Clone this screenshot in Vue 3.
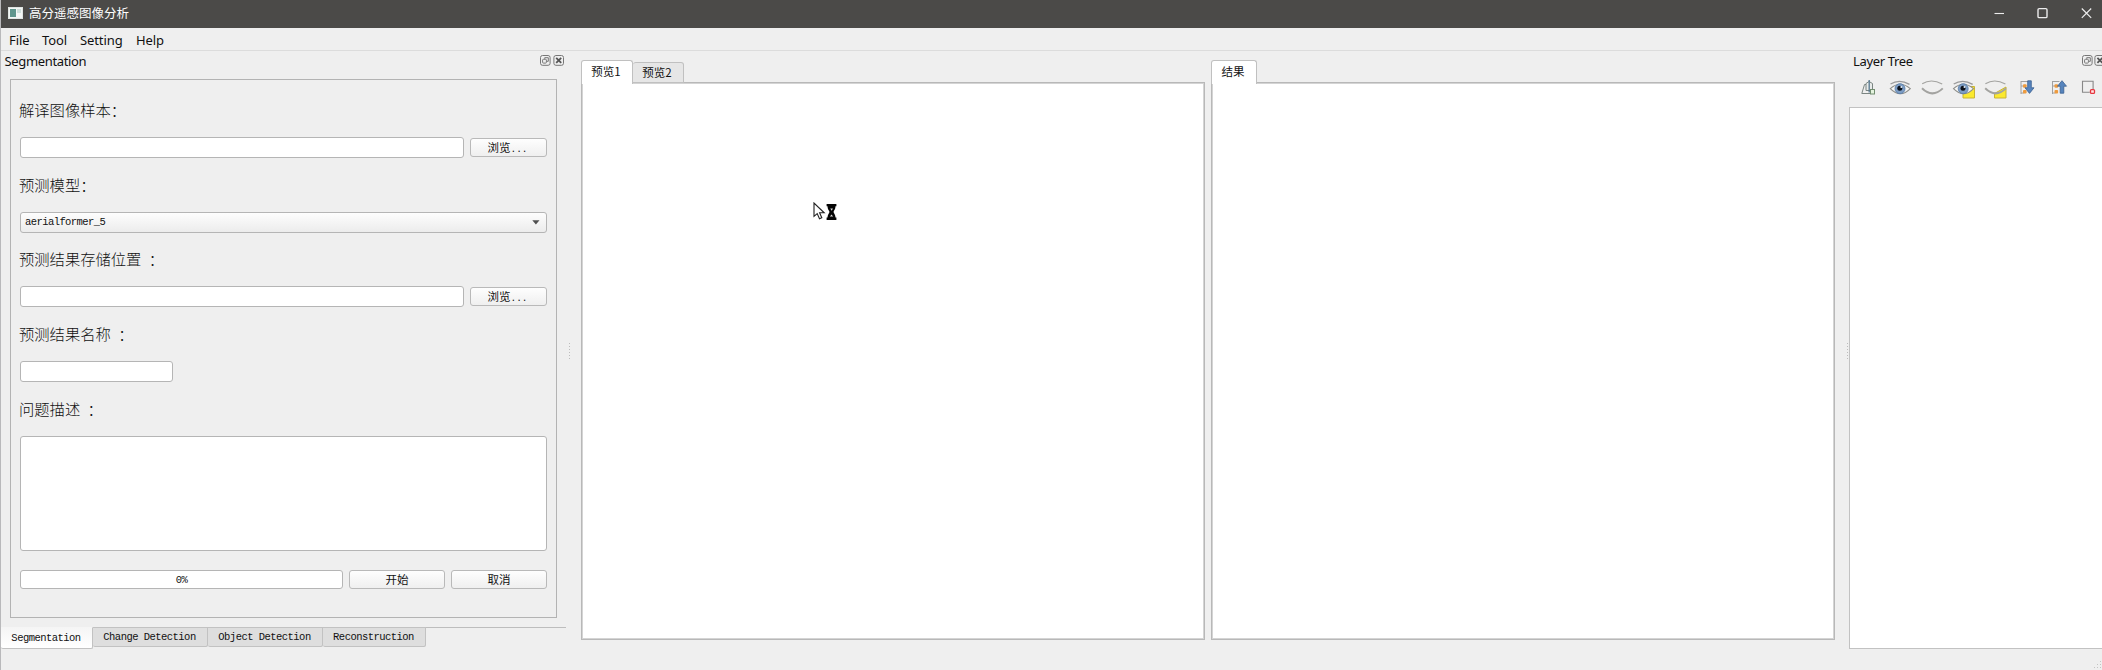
<script setup>
import { ref } from 'vue'

const menus = ['File', 'Tool', 'Setting', 'Help']
const dockTabs = ['Segmentation', 'Change Detection', 'Object Detection', 'Reconstruction']
const activeDock = ref(0)
const grip = [0, 1, 2, 3, 4, 5]
</script>

<template>
  <div class="window">
    <header class="titlebar">
      <svg class="appicon" width="15" height="12" viewBox="0 0 15 12">
        <rect x=".5" y=".5" width="14" height="11" fill="#f3f6f5" stroke="#dfe5e3" />
        <rect x="2" y="2" width="6" height="8" fill="#5f968d" />
        <rect x="9" y="2" width="4" height="4" fill="#cfe0dc" />
      </svg>
      <span class="title">高分遥感图像分析</span>
      <svg class="winbtns" width="100" height="14" viewBox="0 0 100 14" fill="none" stroke="#ececec">
        <path d="M1.500 7.500H11" stroke-width="1.1" />
        <rect x="45" y="2.6" width="9" height="9" rx="1.2" stroke-width="1.4" />
        <path d="M88.8 2.500l9.400 9.400M98.200 2.500l-9.400 9.400" stroke-width="1.2" />
      </svg>
    </header>
    <nav class="menubar">
      <span v-for="m in menus" :key="m" :class="m.toLowerCase()">{{ m }}</span>
    </nav>

    <main class="main">
      <section class="dock">
        <div class="docktitle">
          <span>Segmentation</span>
          <svg class="dockbtns" width="24" height="11" viewBox="0 0 24 11" fill="none" stroke="#777">
            <rect x=".5" y=".5" width="9.6" height="9.8" rx="2" />
            <rect x="2.6" y="4.3" width="3.8" height="3.8" rx=".8" />
            <path d="M4.7 3.8V2.7h3.6v3.6H7" />
            <rect x="13.9" y=".5" width="9.6" height="9.8" rx="2" />
            <path d="M16.2 2.8l5 5M21.2 2.8l-5 5" stroke="#555" stroke-width="1.8" />
          </svg>
        </div>
        <form class="panel" @submit.prevent>
          <label>解译图像样本：</label>
          <div class="row">
            <div class="field wide"></div>
            <button class="btn browse">浏览<i>...</i></button>
          </div>
          <label>预测模型：</label>
          <div class="row">
            <div class="combo">
              <span>aerialformer_5</span>
              <svg width="8" height="5" viewBox="0 0 8 5"><path d="M.3.3h7.2L3.9 4.6z" fill="#505050" /></svg>
            </div>
          </div>
          <label>预测结果存储位置 ：</label>
          <div class="row">
            <div class="field wide"></div>
            <button class="btn browse">浏览<i>...</i></button>
          </div>
          <label>预测结果名称 ：</label>
          <div class="row"><div class="field short"></div></div>
          <label>问题描述 ：</label>
          <div class="field area"></div>
          <div class="actions">
            <div class="progress">0%</div>
            <button class="btn">开始</button>
            <button class="btn">取消</button>
          </div>
        </form>
        <div class="docktabs">
          <span
            v-for="(t, i) in dockTabs"
            :key="t"
            class="dtab"
            :class="[{ active: i === activeDock }, 'd' + i]"
            @click="activeDock = i"
          >{{ t }}</span>
          <span class="rest"></span>
        </div>
      </section>

      <div class="splitter left"><i v-for="g in grip" :key="g"></i></div>

      <section class="view">
        <div class="tabs">
          <span class="tab on">预览1</span>
          <span class="tab">预览2</span>
        </div>
        <div class="canvas"></div>
      </section>
      <section class="view result">
        <div class="tabs"><span class="tab on">结果</span></div>
        <div class="canvas"></div>
      </section>

      <div class="splitter right"><i v-for="g in grip" :key="g"></i></div>

      <section class="layers">
        <div class="docktitle">
          <span>Layer Tree</span>
          <svg class="dockbtns" width="24" height="11" viewBox="0 0 24 11" fill="none" stroke="#777">
            <rect x=".5" y=".5" width="9.6" height="9.8" rx="2" />
            <rect x="2.6" y="4.3" width="3.8" height="3.8" rx=".8" />
            <path d="M4.7 3.8V2.7h3.6v3.6H7" />
            <rect x="12.9" y=".5" width="9.6" height="9.8" rx="2" />
            <path d="M15.4 2.8l5 5M20.4 2.8l-5 5" stroke="#555" stroke-width="1.8" />
          </svg>
        </div>
        <svg class="tools" width="244" height="22" viewBox="0 0 244 22" fill="none">
          <defs>
            <g id="eye">
              <path d="M1 4Q10 -1.4 20 4.4" stroke="#9a9a9a" stroke-width="1.3" />
              <path d="M.8 8.600Q10.500 -.2 20.800 8.600Q11 19 .8 8.600z" fill="#f6f6f4" stroke="#8e8e8a" stroke-width="1.1" />
              <circle cx="10.5" cy="8.700" r="5" fill="#7d9dc4" stroke="#567ba8" stroke-width=".8" />
              <circle cx="10.300" cy="8.2" r="2.5" fill="#0c1119" />
              <circle cx="11.8" cy="6.9" r="1" fill="#e8f0f8" />
            </g>
            <g id="lid" stroke="#a3a3a0">
              <path d="M1 3.8Q10 -2 21 4" stroke-width="1.1" />
              <path d="M.8 8.300Q11 18.400 21.600 8.400" stroke-width="1.9" />
            </g>
            <g id="tree">
              <path d="M1.500 1v13M1.500 1.500h7M1.500 6h3M1.500 13h3" stroke="#a0a0a0" />
              <rect x="3.500" y="4.200" width="3.600" height="3.600" rx="1" fill="#ee9b3e" />
              <rect x="3.500" y="10" width="3.600" height="3.600" rx="1" fill="#ee9b3e" />
            </g>
          </defs>
          <g stroke="#7b8582" stroke-width="1">
            <path d="M3.500 4.500L.8 13.500H9M3.500 4.500H6" />
            <path d="M5 10.500V3.500L8 1.500l3.500 2v7z" fill="#e8ebea" />
            <path d="M8.200 0v12.500" stroke="#557890" stroke-width="1.3" />
            <rect x="9.500" y="9.500" width="4" height="4.500" fill="#e4f3de" stroke="#728d70" />
          </g>
          <use href="#eye" x="28.500" y="0" />
          <use href="#lid" x="60.200" y="0" />
          <path d="M102 6.500h11.500v11.500H102z" fill="#fbe92e" stroke="#c9b435" />
          <use href="#eye" x="91.700" y="0" />
          <path d="M133.500 13.500L145 7v11h-11.500z" fill="#fbe92e" stroke="#c9b435" />
          <use href="#lid" x="123.400" y="0" />
          <use href="#tree" x="158.500" y="0" />
          <path d="M166.700 .8h3.600v7h2.700l-4.500 5.600-4.500-5.600h2.700z" fill="#5684bd" stroke="#3a6090" stroke-width=".8" />
          <use href="#tree" x="190" y="0" />
          <path d="M199.200 13.200h3.600v-7h2.700L201 .7l-4.500 5.500h2.700z" fill="#5684bd" stroke="#3a6090" stroke-width=".8" />
          <path d="M228.800 12.300H221.500V1.200h10.600v8" stroke="#888" stroke-width="1.1" />
          <rect x="229.500" y="9.600" width="4" height="3.800" rx="1" fill="#ffe5e5" stroke="#e5363f" stroke-width="1.300" />
        </svg>
        <div class="tree"></div>
      </section>
    </main>

    <svg class="cursor" width="26" height="20" viewBox="0 0 26 20">
      <path d="M1 1v13.400l3.200-2.800 2.300 5.200 2.300-1-2.200-5h4.600z" fill="#fff" stroke="#222" stroke-width="1.1" />
      <path d="M13.600 2h9.800v2.300h-.9c0 3-1.600 4.200-2 5.700.4 1.500 2 2.800 2 5.400h.9V18h-9.800v-2.600h.9c0-2.600 1.600-3.900 2-5.400-.4-1.500-2-2.700-2-5.700h-.9z" fill="#050505" />
      <path d="M17.300 6.500h2.600l-1.200 2.200zM18.500 12.400l1.600 2.100h-3.200z" fill="#ddd" />
    </svg>
    <svg class="sizegrip" width="9" height="9" viewBox="0 0 9 9" fill="#c4c4c4">
      <path d="M7 0h1v1H7zM4 3h1v1H4zM7 3h1v1H7zM1 6h1v1H1zM4 6h1v1H4zM7 6h1v1H7z" />
    </svg>
  </div>
</template>

<style>
body { margin: 0; background: #efefef; }
</style>

<style scoped>
.window {
  position: relative;
  box-sizing: border-box;
  width: 2102px;
  height: 670px;
  overflow: hidden;
  background: #efefef;
  color: #111;
  border-left: 1px solid #b9b9bb;
  font-family: "Noto Sans", "Noto Sans CJK SC", sans-serif;
  font-size: 13px;
  display: flex;
  flex-direction: column;
}
.titlebar {
  height: 28px;
  flex: none;
  margin-left: -1px;
  background: #4b4a48;
  display: flex;
  align-items: center;
}
.appicon { margin-left: 8px; margin-top: -2px; }
.title {
  margin-left: 6px;
  margin-top: -2px;
  color: #fff;
  font: 12.5px/20px "Noto Sans CJK SC", sans-serif;
}
.winbtns { margin-left: auto; margin-right: 9px; margin-top: -2px; }
.menubar {
  height: 22px;
  flex: none;
  border-bottom: 1px solid #dcdcdc;
  display: flex;
  line-height: 24px;
  padding-left: 8px;
  letter-spacing: -0.1px;
}
.menubar span { flex: none; white-space: nowrap; }
.menubar .file { width: 33px; }
.menubar .tool { width: 38px; }
.menubar .setting { width: 56px; }
.main {
  flex: 1;
  min-height: 0;
  display: grid;
  grid-template-columns: 565px 15px 624px 6px 624px 14px 253px;
}
.dock { grid-column: 1; display: flex; flex-direction: column; }
.docktitle {
  height: 28px;
  flex: none;
  display: flex;
  justify-content: space-between;
  line-height: 20px;
  padding-left: 3.5px;
  box-sizing: border-box;
  letter-spacing: -0.35px;
}
.dockbtns { margin-top: 4px; margin-right: 2px; }
.panel {
  box-sizing: border-box;
  width: 547px;
  height: 539px;
  margin-left: 9px;
  border: 1px solid #b3b3b3;
  padding: 17px 9px 0;
  display: flex;
  flex-direction: column;
}
label {
  height: 24px;
  line-height: 24px;
  margin-left: -1px;
  font-family: "Noto Sans CJK SC", sans-serif;
  font-size: 15.3px;
  font-weight: 300;
  word-spacing: 4px;
  white-space: pre;
}
.row { display: flex; height: 21px; margin: 16px 0 13.7px; gap: 6px; align-items: center; }
.field, .progress, .combo {
  box-sizing: border-box;
  background: #fff;
  border: 1px solid #b5b5b5;
  border-radius: 3px;
}
.wide { flex: 1; height: 21px; }
.short { width: 153px; height: 21px; }
.area { margin-top: 16px; height: 115px; }
.combo {
  flex: 1;
  height: 21px;
  background: linear-gradient(#fdfdfd, #ececec);
  display: flex;
  align-items: center;
  justify-content: space-between;
  padding: 0 6px 0 4px;
  font: 10.5px/19px "Liberation Mono", monospace;
  letter-spacing: -0.57px;
}
.btn {
  box-sizing: border-box;
  height: 19px;
  width: 96px;
  padding: 0;
  border: 1px solid #b9b9b9;
  border-radius: 3px;
  background: linear-gradient(#fefefe, #efefef);
  color: #111;
  font: 11.5px/16px "Noto Sans CJK SC", sans-serif;
}
.browse { width: 77px; padding: 0 2px 2px 0; }
.browse i { font: 9.5px "Liberation Mono", monospace; }
.actions { display: flex; gap: 6px; margin-top: 19px; }
.progress {
  flex: 1;
  height: 19px;
  font: 10.5px/18px "Liberation Mono", monospace;
  letter-spacing: -0.5px;
  text-align: center;
}
.docktabs {
  display: flex;
  margin-top: 9px;
  font: 10.5px/19px "Liberation Mono", monospace;
  letter-spacing: -0.53px;
}
.dtab {
  box-sizing: border-box;
  height: 20px;
  border: 1px solid #c2c2c2;
  border-left: 0;
  background: #dedede;
  border-radius: 0 0 2px 2px;
  padding-right: 1px;
  text-align: center;
  white-space: nowrap;
}
.dtab.active { height: 22px; border-top-color: #f5f5f5; background: linear-gradient(#f5f5f5, #fff); line-height: 21px; }
.d0 { width: 92px; }
.d1 { width: 115px; }
.d2 { width: 115px; }
.d3 { width: 103px; }
.rest { flex: 1; border-top: 1px solid #bdbdbd; }
.splitter { display: flex; flex-direction: column; gap: 2px; padding-top: 292px; }
.splitter i { width: 1px; height: 1px; background: #bcbcbc; }
.left { grid-column: 2; padding-left: 3px; }
.right { grid-column: 6; padding-left: 12px; }
.view { grid-column: 3; padding-top: 9px; display: flex; flex-direction: column; height: 589px; box-sizing: border-box; }
.result { grid-column: 5; }
.tabs { height: 23px; flex: none; display: flex; align-items: flex-end; position: relative; z-index: 1; margin-bottom: -1px; }
.tab {
  box-sizing: border-box;
  height: 21px;
  width: 51px;
  border: 1px solid #c0c0c0;
  border-left: 0;
  border-radius: 3px 3px 0 0;
  background: #e6e6e6;
  text-align: center;
  padding-right: 2px;
  font: 11.5px/19px "Noto Sans CJK SC", sans-serif;
}
.tab.on {
  height: 24px;
  width: 52px;
  border-left: 1px solid #c0c0c0;
  border-bottom: 0;
  background: #fff;
  line-height: 21px;
  margin-bottom: -1px;
}
.result .tab.on { width: 46px; }
.canvas {
  flex: 1;
  background: #fff;
  border: 1px solid #b8b8b8;
  box-shadow: inset 0 0 0 1px #d4d4d4;
}
.layers { grid-column: 7; display: flex; flex-direction: column; }
.layers .docktitle { padding-left: 4px; width: 259px; }
.tools { margin: 1px 0 0 12px; flex: none; }
.tree {
  box-sizing: border-box;
  height: 542px;
  margin-top: 5px;
  background: #fff;
  border: 1px solid #c2c2c2;
  border-right: 0;
}
.cursor { position: absolute; left: 812px; top: 202px; }
.sizegrip { position: absolute; right: 0; bottom: 0; }
</style>
